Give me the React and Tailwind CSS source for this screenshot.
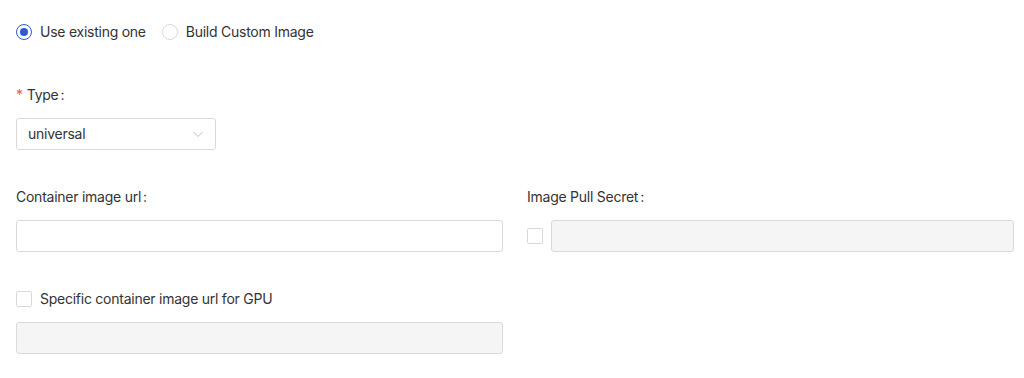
import React from 'react'

const Radio = ({ checked, label }) => (
  <label className="flex items-center gap-2 cursor-pointer">
    <span
      className={`w-4 h-4 rounded-full border flex items-center justify-center bg-white ${
        checked ? 'border-[#2f5bd0]' : 'border-[#d9d9d9]'
      }`}
    >
      {checked && <span className="w-2 h-2 rounded-full bg-[#2f5bd0]" />}
    </span>
    <span>{label}</span>
  </label>
)

const Checkbox = () => (
  <span className="w-4 h-4 rounded-[2px] border border-[#d9d9d9] bg-white shrink-0" />
)

const Label = ({ required, children }) => (
  <div className="h-[22px] flex items-center mb-[12px]">
    {required && <span className="text-[#ff4d4f] mr-1 text-sm">*</span>}
    <span>{children}</span>
    <span className="ml-[2px]">:</span>
  </div>
)

export default function App() {
  return (
    <div
      className="bg-white w-[1024px] h-[378px] pl-4 pr-[10px] pt-[21px] text-sm text-[#333333] tracking-[-0.25px]"
      style={{ fontFamily: 'Inter, "Noto Sans", sans-serif' }}
    >
      <div className="flex items-center gap-4 h-[22px]">
        <Radio checked label="Use existing one" />
        <Radio label="Build Custom Image" />
      </div>

      <div className="mt-[41px]">
        <Label required>Type</Label>
        <div className="w-[200px] h-8 border border-[#d9d9d9] rounded-[3px] flex items-center justify-between pl-[11px] pr-[11px]">
          <span>universal</span>
          <svg width="12" height="12" viewBox="0 0 12 12" fill="none">
            <path d="M1.5 4l4.5 4.5L10.5 4" stroke="#bfbfbf" strokeWidth="1" />
          </svg>
        </div>
      </div>

      <div className="mt-[36px] grid grid-cols-2 gap-x-6">
        <div>
          <Label>Container image url</Label>
          <div className="h-8 border border-[#d9d9d9] rounded-[3px] bg-white" />
        </div>
        <div>
          <Label>Image Pull Secret</Label>
          <div className="flex items-center gap-2">
            <Checkbox />
            <div className="flex-1 h-8 border border-[#d9d9d9] rounded-[3px] bg-[#f5f5f5]" />
          </div>
        </div>
      </div>

      <div className="mt-[36px] w-[487px]">
        <div className="h-[22px] flex items-center gap-2 mb-[12px]">
          <Checkbox />
          <span>Specific container image url for GPU</span>
        </div>
        <div className="h-8 border border-[#d9d9d9] rounded-[3px] bg-[#f5f5f5]" />
      </div>
    </div>
  )
}
